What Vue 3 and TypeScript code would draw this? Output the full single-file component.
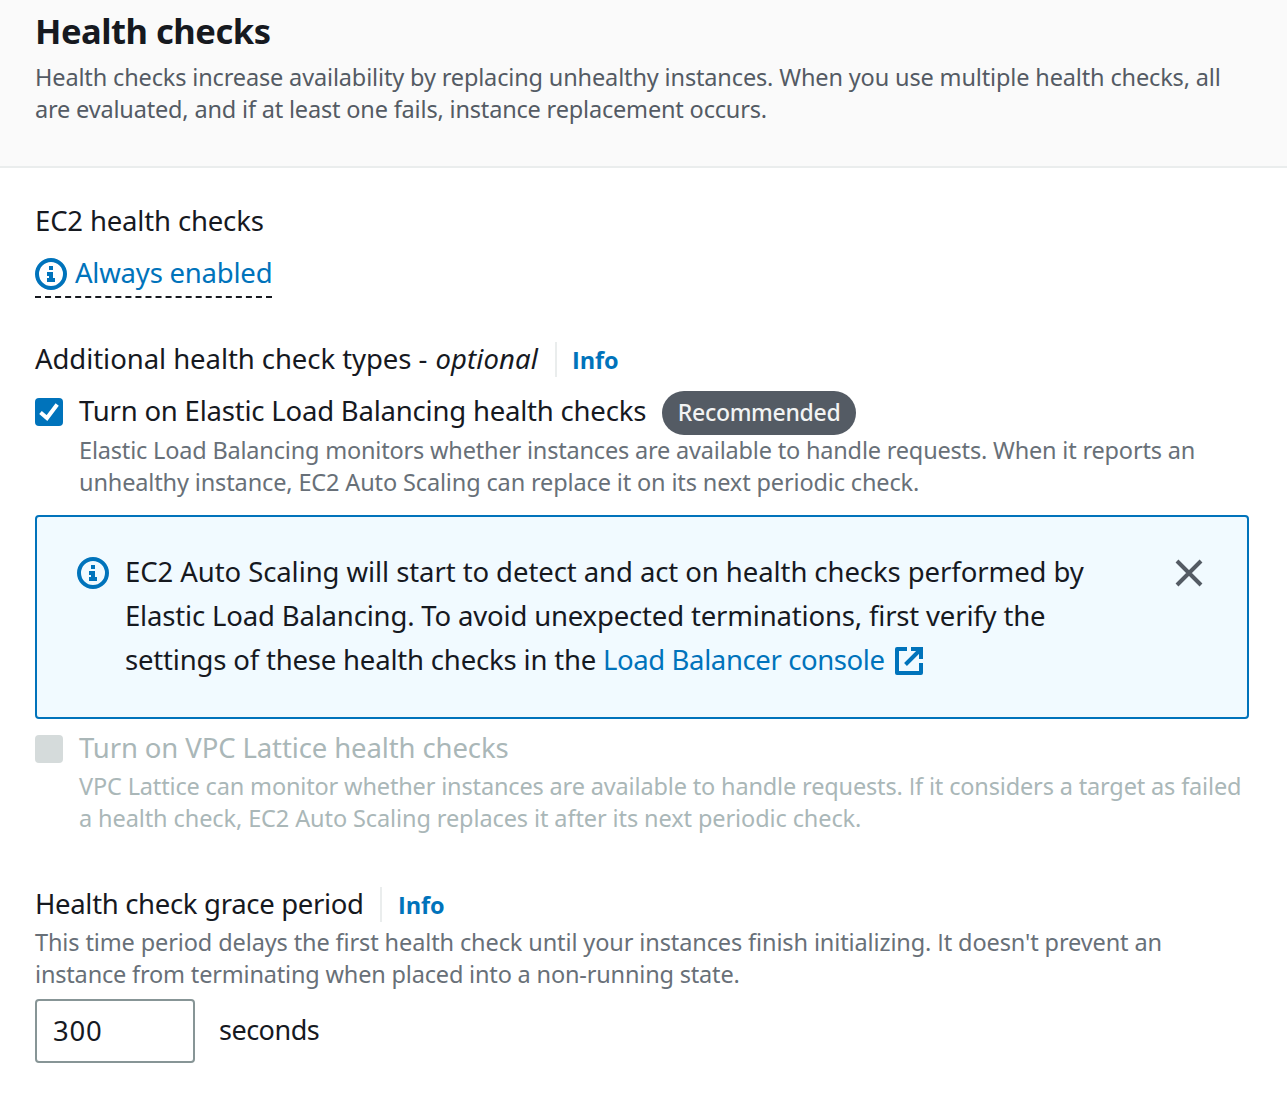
<script setup lang="ts">
import { ref, h } from 'vue'
import type { CSSProperties } from 'vue'

interface Line {
  text: string
  track: number
}

const elbEnabled = ref(true)
const latticeEnabled = ref(false)
const alertVisible = ref(true)
const gracePeriod = ref('300')

const intro: Line[] = [
  { text: 'Health checks increase availability by replacing unhealthy instances. When you use multiple health checks, all', track: -0.145 },
  { text: 'are evaluated, and if at least one fails, instance replacement occurs.', track: -0.175 },
]
const elbHelp: Line[] = [
  { text: 'Elastic Load Balancing monitors whether instances are available to handle requests. When it reports an', track: -0.185 },
  { text: 'unhealthy instance, EC2 Auto Scaling can replace it on its next periodic check.', track: -0.137 },
]
const alertLines: Line[] = [
  { text: 'EC2 Auto Scaling will start to detect and act on health checks performed by', track: -0.078 },
  { text: 'Elastic Load Balancing. To avoid unexpected terminations, first verify the', track: -0.17 },
]
const latticeHelp: Line[] = [
  { text: 'VPC Lattice can monitor whether instances are available to handle requests. If it considers a target as failed', track: -0.155 },
  { text: 'a health check, EC2 Auto Scaling replaces it after its next periodic check.', track: -0.1 },
]
const graceHelp: Line[] = [
  { text: "This time period delays the first health check until your instances finish initializing. It doesn't prevent an", track: -0.115 },
  { text: 'instance from terminating when placed into a non-running state.', track: -0.176 },
]

const track = (value: number): CSSProperties => ({ letterSpacing: `${value}px` })

// Capital I is set in Open Sans, which draws it without serifs.
const TextLines = (props: { lines: Line[] }) =>
  props.lines.map((line) =>
    h(
      'span',
      { class: 'line', style: track(line.track) },
      line.text.split(/(I)/).map((part) => (part === 'I' ? h('span', { class: 'cap-i' }, part) : part)),
    ),
  )
TextLines.props = ['lines']

const InfoIcon = () =>
  h('svg', { class: 'info-icon', viewBox: '0 0 32 32', width: 32, height: 32 }, [
    h('circle', { cx: 16, cy: 16, r: 14, fill: 'none', stroke: 'currentColor', 'stroke-width': 4 }),
    h('path', { d: 'M14 8h4v4h-4zM12 14h6v6h2v4h-8v-4h2v-2h-2z', fill: 'currentColor' }),
  ])
</script>

<template>
  <section class="panel">
    <header class="panel-header">
      <h2>Health checks</h2>
      <p class="help intro"><TextLines :lines="intro" /></p>
    </header>

    <div class="panel-body">
      <div class="label" :style="track(-0.16)">EC2 health checks</div>
      <div class="status">
        <InfoIcon />
        <span :style="track(-0.22)">Always enabled</span>
      </div>

      <div class="label-row types">
        <span :style="track(-0.062)">Additional health check types - <em>optional</em></span>
        <a class="info">Info</a>
      </div>

      <label class="check-row">
        <input v-model="elbEnabled" type="checkbox" />
        <span class="box on">
          <svg v-if="elbEnabled" viewBox="0 0 28 28" width="28" height="28">
            <path d="M5.5 14.5L12 20L22.2 6.5" fill="none" stroke="#fff" stroke-width="4" />
          </svg>
        </span>
        <span :style="track(-0.205)">Turn on Elastic Load Balancing health checks</span>
        <span class="badge">Recommended</span>
      </label>
      <p class="help indent elb-help"><TextLines :lines="elbHelp" /></p>

      <div v-if="alertVisible" class="alert">
        <InfoIcon />
        <div class="alert-text">
          <TextLines :lines="alertLines" />
          <div class="last-line">
            <span :style="track(-0.185)">settings of these health checks in the</span>
            <a :style="track(-0.39)">Load Balancer console</a>
            <svg class="external" viewBox="0 0 28 28" width="28" height="28">
              <path d="M12 2H2V26H26V16" fill="none" stroke="currentColor" stroke-width="4" stroke-linejoin="round" />
              <path d="M16 2H26V12M25 3L10.5 17.5" fill="none" stroke="currentColor" stroke-width="4" />
            </svg>
          </div>
        </div>
        <button class="close" type="button" aria-label="Close" @click="alertVisible = false">
          <svg viewBox="0 0 28 28" width="28" height="28">
            <path d="M2 2L26 26M26 2L2 26" stroke="#545b64" stroke-width="4" />
          </svg>
        </button>
      </div>

      <label class="check-row lattice">
        <input v-model="latticeEnabled" type="checkbox" disabled />
        <span class="box"></span>
        <span :style="track(-0.115)">Turn on VPC Lattice health checks</span>
      </label>
      <p class="help indent lattice-help"><TextLines :lines="latticeHelp" /></p>

      <div class="label-row grace">
        <span :style="track(-0.32)">Health check grace period</span>
        <a class="info">Info</a>
      </div>
      <p class="help grace-help"><TextLines :lines="graceHelp" /></p>
      <div class="input-row">
        <input v-model="gracePeriod" class="number" type="text" />
        <span class="unit">seconds</span>
      </div>
    </div>
  </section>
</template>

<style>
body {
  background: #fff;
}
.line {
  display: block;
  white-space: nowrap;
}
.cap-i {
  font-family: 'Open Sans', sans-serif;
  line-height: 1;
}
.info-icon {
  display: block;
  flex: none;
  color: #0073bb;
}
</style>

<style scoped>
.panel {
  font-family: 'Noto Sans', 'Open Sans', sans-serif;
  font-size: 27.5px;
  line-height: 44px;
  color: #16191f;
}
.panel-header {
  box-sizing: border-box;
  height: 168px;
  padding: 9px 35px 0;
  background: #fafafa;
  border-bottom: 2px solid #eaeded;
}
h2 {
  margin: 0;
  font-size: 34.5px;
  line-height: 44px;
  font-weight: 700;
  letter-spacing: -0.47px;
}
.help {
  margin: 0;
  font-size: 23.5px;
  line-height: 32px;
  color: #687078;
}
.intro {
  margin-top: 8px;
  color: #545b64;
}
.panel-body {
  padding: 31px 38px 0 35px;
}
.status {
  display: inline-flex;
  align-items: flex-start;
  box-sizing: border-box;
  width: 237px;
  height: 47px;
  margin-top: 8px;
  gap: 8px;
  color: #0073bb;
  border-bottom: 2px dashed #16191f;
  white-space: nowrap;
  vertical-align: top;
}
.status > .info-icon {
  margin-top: 7px;
}
.label-row {
  display: flex;
  align-items: center;
  white-space: nowrap;
}
.types {
  margin-top: 39px;
}
.types > span:first-child {
  width: 520px;
}
em {
  margin-left: 1px;
  letter-spacing: 0.1px;
}
.info {
  height: 35px;
  padding-left: 15px;
  border-left: 2px solid #eaeded;
  font-family: 'Open Sans', sans-serif;
  font-size: 23.5px;
  line-height: 36px;
  font-weight: 700;
  letter-spacing: -0.11px;
  color: #0073bb;
}
.check-row {
  display: flex;
  align-items: center;
  height: 44px;
  margin-top: 8px;
  white-space: nowrap;
}
.check-row input {
  display: none;
}
.box {
  width: 28px;
  height: 28px;
  margin: 2px 16px 0 0;
  border-radius: 4px;
  background: #d5dbdb;
}
.box.on {
  background: #0073bb;
}
.box svg {
  display: block;
}
.badge {
  width: 194px;
  height: 44px;
  margin: 4px 0 0 16px;
  border-radius: 22px;
  background: #545b64;
  color: #f2f3f3;
  font-size: 23px;
  line-height: 43px;
  font-weight: 500;
  letter-spacing: -0.3px;
  text-align: center;
}
.indent {
  padding-left: 44px;
}
.elb-help {
  margin-top: 1px;
}
.alert {
  display: flex;
  align-items: flex-start;
  box-sizing: border-box;
  height: 204px;
  margin-top: 17px;
  padding: 33px 44px 0 40px;
  border: 2px solid #0073bb;
  border-radius: 4px;
  background: #f1faff;
}
.alert > .info-icon {
  margin-top: 7px;
}
.alert-text {
  flex: 1;
  margin-left: 16px;
}
.last-line {
  display: flex;
  align-items: center;
  white-space: nowrap;
}
.last-line a {
  margin-left: 7px;
  color: #0073bb;
}
.external {
  margin: 2px 0 0 10px;
  color: #0073bb;
}
.close {
  margin: 9px 0 0;
  padding: 0;
  border: 0;
  background: none;
}
.close svg {
  display: block;
}
.lattice {
  margin-top: 7px;
  color: #aab7b8;
}
.lattice-help {
  margin-top: 0;
  color: #aab7b8;
}
.grace {
  margin-top: 48px;
}
.grace > span:first-child {
  width: 345px;
}
.grace .info {
  padding-left: 16px;
}
.grace-help {
  margin-top: 0;
}
.input-row {
  display: flex;
  align-items: center;
  margin-top: 9px;
}
.number {
  box-sizing: border-box;
  width: 160px;
  height: 64px;
  margin: 0;
  padding: 0 16px 2px;
  border: 2px solid #879596;
  border-radius: 4px;
  background: #fff;
  color: #16191f;
  font: 27.5px/44px 'Noto Sans', sans-serif;
  letter-spacing: 0.77px;
  outline: none;
}
.unit {
  margin: 0 0 2px 24px;
  font-size: 27px;
  letter-spacing: -0.5px;
}
</style>
